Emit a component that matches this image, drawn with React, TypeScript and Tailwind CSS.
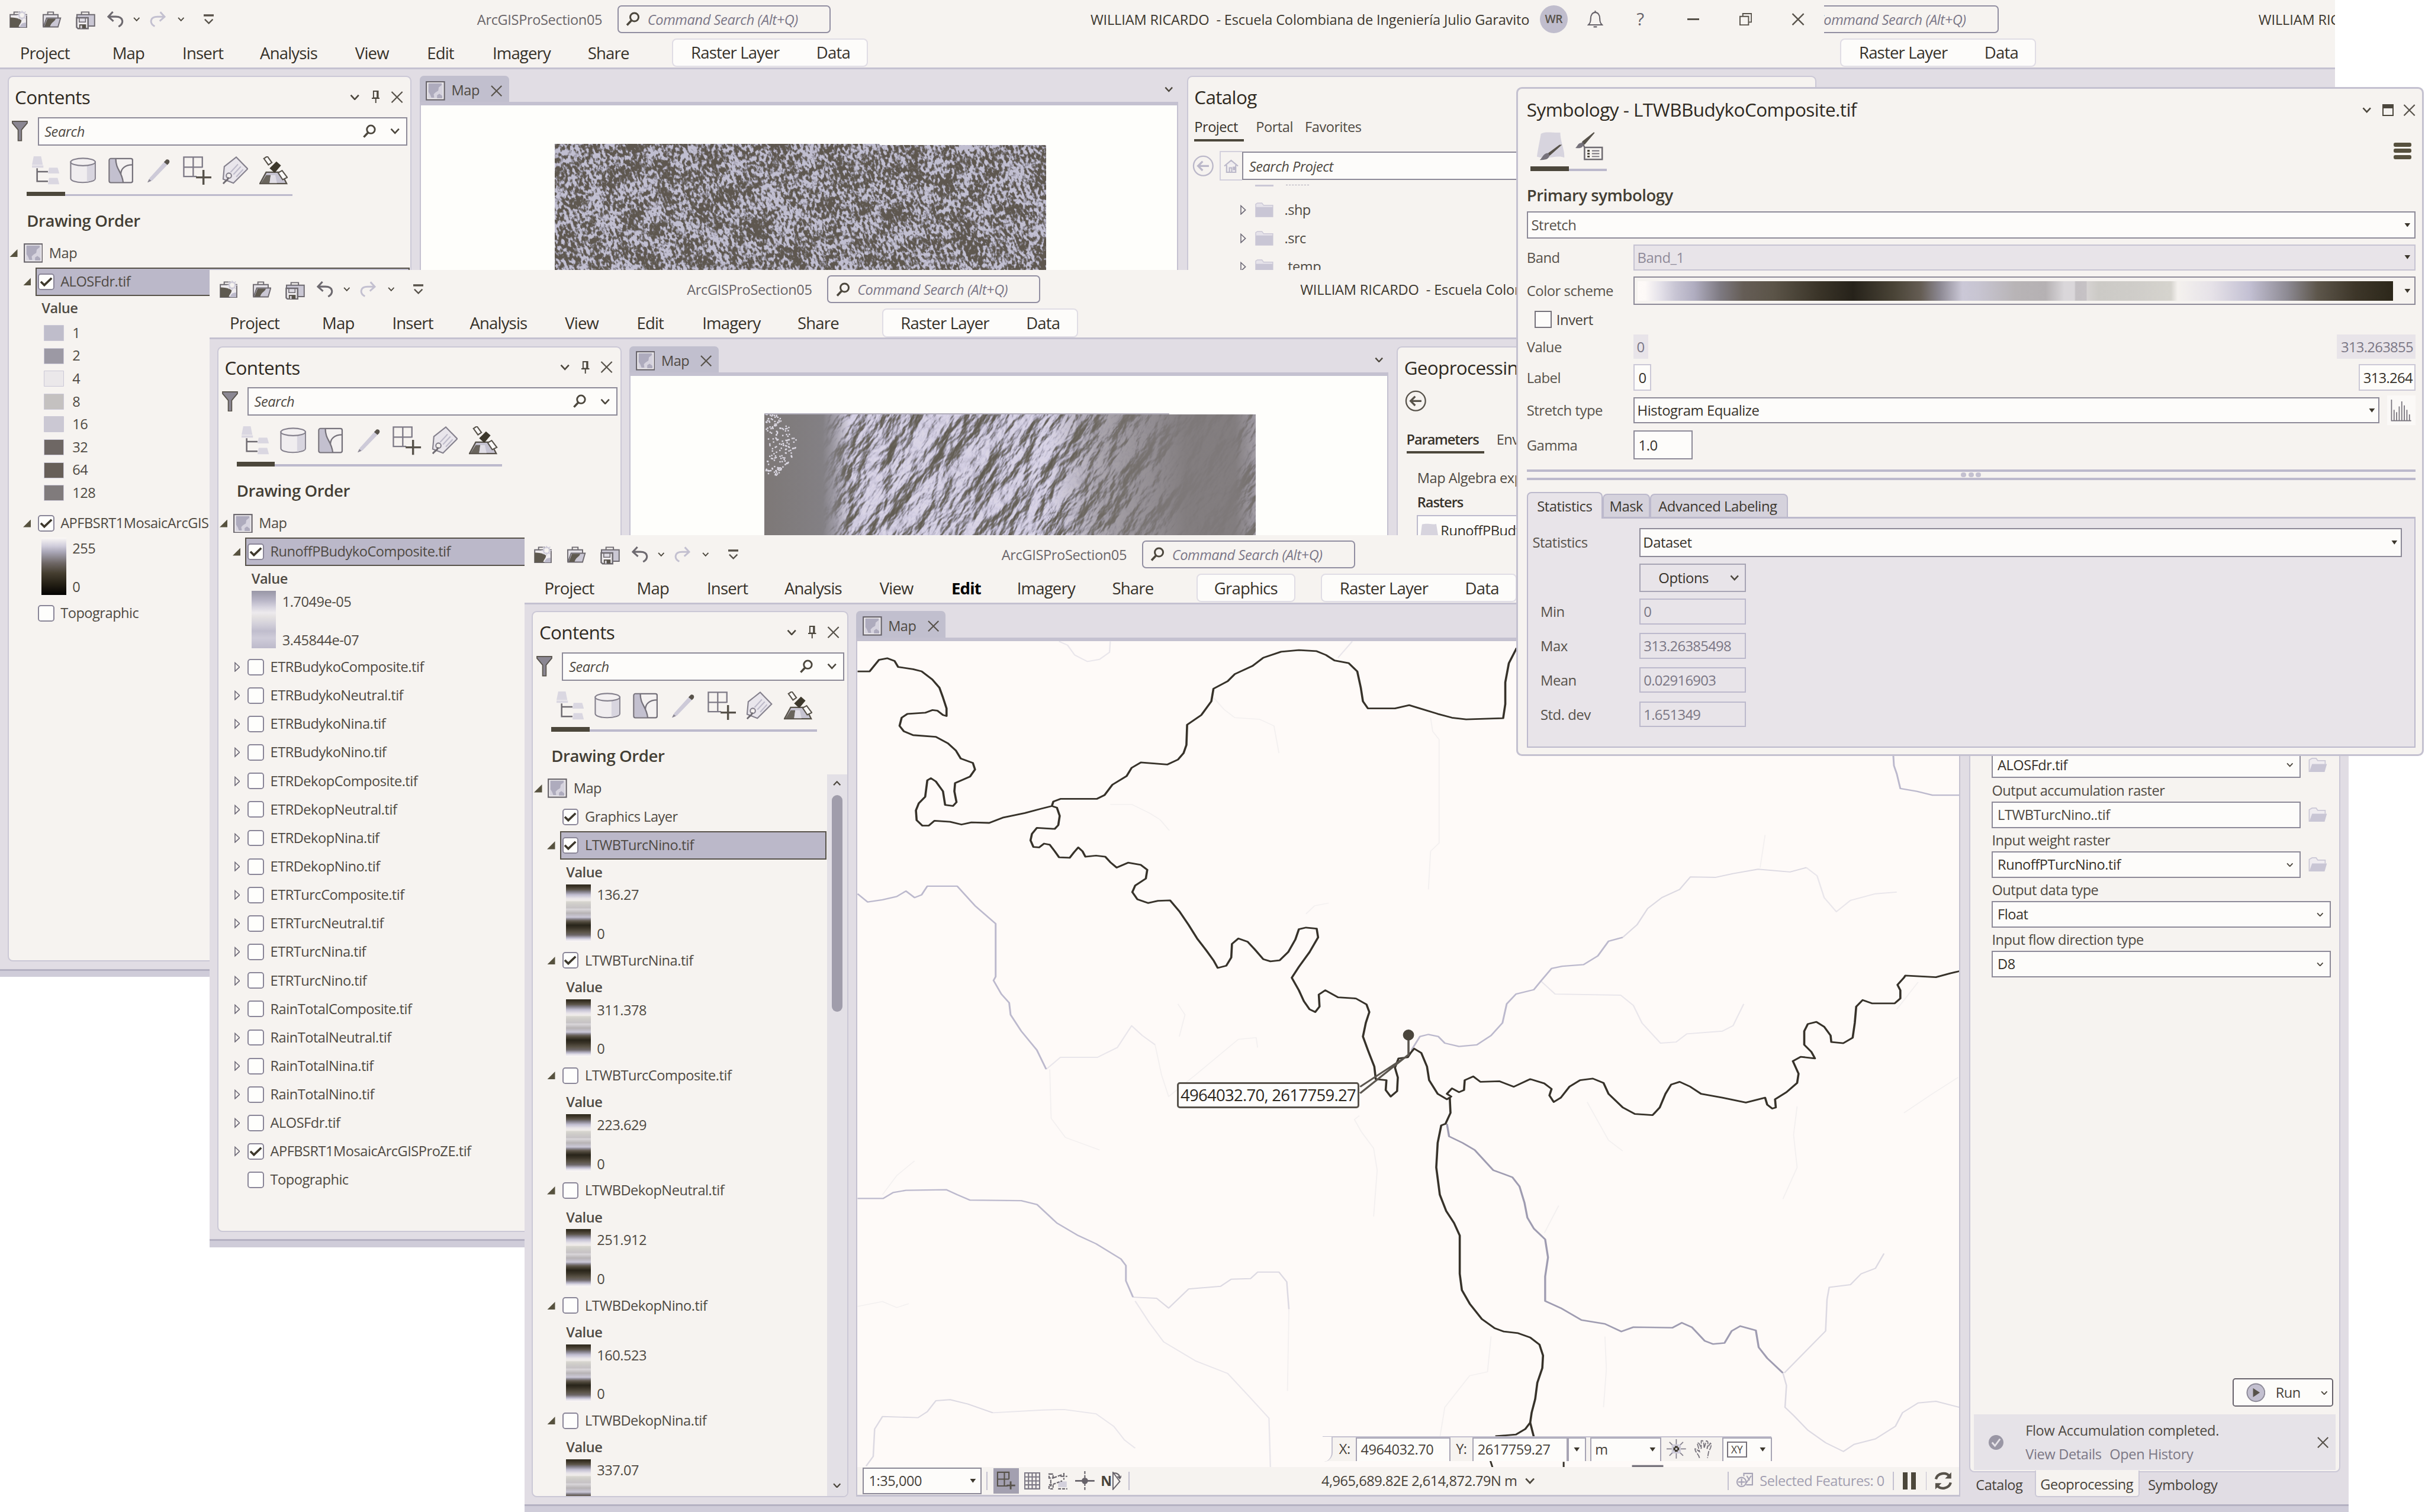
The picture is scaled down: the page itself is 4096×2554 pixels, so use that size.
import React from "react";

type P = { className?: string };

/* ---------- small glyphs ---------- */
const Chev = ({ className = "" }: P) => (
  <svg viewBox="0 0 16 10" className={`shrink-0 ${className}`} fill="none" stroke="#4c473d" strokeWidth="2.6">
    <path d="M1.5 1.5 8 8.5l6.5-7" />
  </svg>
);
const Cross = ({ className = "" }: P) => (
  <svg viewBox="0 0 20 20" className={`shrink-0 ${className}`} fill="none" stroke="#57524a" strokeWidth="2.2">
    <path d="M1 1l18 18M19 1 1 19" />
  </svg>
);
const Caret = ({ className = "" }: P) => (
  <svg viewBox="0 0 10 7" className={`h-[7px] w-[11px] shrink-0 ${className}`}>
    <path d="M0 0h10L5 7z" fill="#3b362c" />
  </svg>
);
const Pin = ({ className = "" }: P) => (
  <svg viewBox="0 0 14 22" className={`shrink-0 ${className}`} fill="none" stroke="#4c473d" strokeWidth="2">
    <path d="M3 1h8v12H3zM0 13.5h14M7 14v8M9.5 1v12" />
  </svg>
);
const Lens = ({ className = "" }: P) => (
  <svg viewBox="0 0 24 24" className={`shrink-0 ${className}`} fill="none" stroke="#4c473d" strokeWidth="3">
    <circle cx="14.5" cy="9" r="7" />
    <path d="M10 14 2 22.5" strokeWidth="3.6" />
  </svg>
);
const OpenTri = ({ className = "" }: P) => (
  <svg viewBox="0 0 14 14" className={`h-[14px] w-[14px] shrink-0 ${className}`}>
    <path d="M14 0v14H0z" fill="#57523f" />
  </svg>
);
const ClosedTri = ({ className = "" }: P) => (
  <svg viewBox="0 0 10 18" className={`h-[18px] w-[10px] shrink-0 ${className}`} fill="none" stroke="#6b6775" strokeWidth="1.6">
    <path d="M1 1.5 9 9l-8 7.5z" />
  </svg>
);
const MapIcon = ({ className = "" }: P) => (
  <svg viewBox="0 0 34 34" className={`h-[34px] w-[34px] shrink-0 ${className}`}>
    <rect x="1.2" y="1.2" width="31.6" height="31.6" fill="#f3f0f2" stroke="#67636a" strokeWidth="2.2" />
    <rect x="4" y="4" width="26" height="26" fill="#d6d3de" />
    <path d="M5 4h23v3l-5 4-1 6-5 3-3 3 1 6H10l-2-5-3-5zM20 25l4-3 5 4v4h-9z" fill="#aeabbd" />
  </svg>
);
const Check = ({ on = false }: { on?: boolean }) => (
  <span className="flex h-[29px] w-[29px] shrink-0 items-center justify-center rounded-[5px] border-[2.1px] border-[#8a8698] bg-[#fefefc]">
    {on && (
      <svg viewBox="0 0 24 20" className="h-[19px] w-[23px]" fill="none" stroke="#3d382c" strokeWidth="4">
        <path d="M2 9.5 8.5 16 22 3" />
      </svg>
    )}
  </span>
);
const Folder = ({ className = "" }: P) => (
  <svg viewBox="0 0 32 26" className={`shrink-0 ${className}`}>
    <path d="M1 25V4l5-3h7l3 4h13v6" fill="#efecf0" stroke="#cbc8d6" strokeWidth="1.8" />
    <path d="M1 25 6 11h26l-4 14z" fill="#c9c6d5" />
  </svg>
);
const ClosedFolder = () => (
  <svg viewBox="0 0 32 26" className="h-[26px] w-[32px] shrink-0">
    <path d="M1 25V3l3-2h8l3 4h16v20z" fill="#e6e3ea" stroke="#cbc8d6" strokeWidth="1.5" />
    <path d="M1 8h30v17H1z" fill="#c9c6d5" />
  </svg>
);
const BackArrow = ({ color = "#bbb8c9", className = "" }: P & { color?: string }) => (
  <svg viewBox="0 0 38 38" className={`h-[38px] w-[38px] shrink-0 ${className}`} fill="none" stroke={color} strokeWidth="2.4">
    <circle cx="19" cy="19" r="17" />
    <path d="M29 19H11M18 11l-8 8 8 8" strokeWidth="3.4" />
  </svg>
);

/* ---------- title bar ---------- */
const NewProject = () => (
  <svg viewBox="0 0 32 30" className="h-[30px] w-[32px] shrink-0">
    <path d="M1.2 29V7H30v22z" fill="#efecef" stroke="#6e6a70" strokeWidth="2" />
    <path d="M8 7V2.5h10V7" fill="none" stroke="#6e6a70" strokeWidth="2" />
    <path d="M1 12c7 0 16 1 20 5 0 5-4 7-5 12H1z" fill="#5f5a50" />
    <path d="M18 29c2-7 6-8 11-8v8z" fill="#bdbacb" />
    <circle cx="22" cy="8" r="5.5" fill="#f6f3f0" stroke="#cfccd9" strokeWidth="2.2" />
    <path d="M22-1v18M13 8h18M15.5 1.5l13 13M28.5 1.5l-13 13" stroke="#cfccd9" strokeWidth="1.6" />
    <circle cx="22" cy="8" r="3.6" fill="#f6f3f0" />
  </svg>
);
const OpenProject = () => (
  <svg viewBox="0 0 34 30" className="h-[30px] w-[34px] shrink-0">
    <path d="M2 28V7h26v6" fill="#e3e0e6" stroke="#6e6a70" strokeWidth="2" />
    <path d="M10 7V2.5h10V7" fill="none" stroke="#6e6a70" strokeWidth="2" />
    <path d="M2.5 28.5 8 13h24.5L28 28.5z" fill="#cac7d4" stroke="#6e6a70" strokeWidth="2" />
    <path d="M4 28 9.5 14H24c-2 6-8 6-10 14z" fill="#5f5a50" />
  </svg>
);
const SaveProject = () => (
  <svg viewBox="0 0 34 33" className="h-[33px] w-[34px] shrink-0">
    <path d="M2 13V7h31v20H22" fill="#cac7d4" stroke="#6e6a70" strokeWidth="2" />
    <path d="M10 7V2.5h13V7" fill="none" stroke="#6e6a70" strokeWidth="2" />
    <path d="M1.5 12.5h20v19H4l-2.5-2.5z" fill="#f0edf0" stroke="#6e6a70" strokeWidth="2.6" />
    <path d="M6 13h11v7H6z" fill="#dedbe3" stroke="#6e6a70" strokeWidth="1.6" />
    <path d="M6 24h12v7H6z" fill="#57524a" />
    <path d="M8 26h3v5H8z" fill="#d9d6de" />
  </svg>
);
const Undo = ({ color, flip = false }: { color: string; flip?: boolean }) => (
  <svg viewBox="0 0 29 28" className={flip ? "h-[28px] w-[28px] shrink-0 -scale-x-100" : "h-[28px] w-[29px] shrink-0"} fill="none" stroke={color} strokeWidth="3.2">
    <path d="M10 1 2 9.5l9 8M2 9.5h13c14 0 15 12 5 17.5" />
  </svg>
);

function TitleBar() {
  return (
    <div className="flex h-[67px] shrink-0 items-center text-[24.5px]">
      <span className="ml-[17px] flex shrink-0"><NewProject /></span>
      <span className="ml-[25px] flex shrink-0"><OpenProject /></span>
      <span className="ml-[25px] flex shrink-0 pt-1"><SaveProject /></span>
      <span className="ml-[21px] flex shrink-0"><Undo color="#6e6a70" /></span>
      <Chev className="ml-[17px] h-[9px] w-[12px]" />
      <span className="ml-[17px] flex shrink-0"><Undo color="#c3c0d0" flip /></span>
      <Chev className="ml-[21px] h-[9px] w-[12px]" />
      <svg viewBox="0 0 18 18" className="ml-[33px] h-[18px] w-[18px] shrink-0" fill="none" stroke="#57524a">
        <path d="M0 2h18" strokeWidth="3.6" />
        <path d="M2 9l7 7 7-7" strokeWidth="2.4" />
      </svg>
      <span className="ml-[462px] w-[246px] shrink-0 whitespace-nowrap pt-[2px] tracking-[-0.38px] text-[#6a666a]">ArcGISProSection05</span>
      <span className="flex h-[49px] w-[374px] shrink-0 items-center rounded-[7px] border-[2.1px] border-[#918ea1] pl-[13px] italic text-[#7b7788]">
        <Lens className="mr-[13px] h-[25px] w-[25px]" />
        <span className="whitespace-nowrap pt-[2px] tracking-[-0.4px]">Command Search (Alt+Q)</span>
      </span>
      <span className="ml-[456px] w-[788px] shrink-0 whitespace-pre pt-[2px] tracking-[-0.15px] text-[#3d382f]">WILLIAM RICARDO  - Escuela Colombiana de Ingeniería Julio Garavito</span>
      <span className="flex h-[49px] w-[49px] shrink-0 items-center justify-center rounded-full bg-[#c0bdcd] text-[20px] font-semibold text-[#57524a]">WR</span>
      <svg viewBox="0 0 28 32" className="ml-[34px] h-[32px] w-[28px] shrink-0" fill="none" stroke="#67636a" strokeWidth="2.2">
        <path d="M14 1v3M2 26h24c-3-3-4-5-4-11 0-6-3-11-8-11S6 9 6 15c0 6-1 8-4 11zM11 29.5h6" />
      </svg>
      <span className="ml-[59px] w-[16px] shrink-0 text-[31px] text-[#67636a]">?</span>
      <span className="ml-[73px] h-[3px] w-[21px] shrink-0 bg-[#57524a]" />
      <svg viewBox="0 0 22 22" className="ml-[70px] h-[22px] w-[22px] shrink-0" fill="none" stroke="#57524a" strokeWidth="2">
        <path d="M1 6h15v15H1zM6 6V1h15v15h-5" />
      </svg>
      <Cross className="ml-[70px] h-[22px] w-[23px]" />
    </div>
  );
}

const MENUS: [string, string][] = [
  ["Project", "w-[162px]"],
  ["Map", "w-[123px]"],
  ["Insert", "w-[136px]"],
  ["Analysis", "w-[167px]"],
  ["View", "w-[126px]"],
  ["Edit", "w-[115px]"],
  ["Imagery", "w-[167px]"],
  ["Share", "w-[147px]"],
];

function MenuBar({ graphics = false, active = "" }: { graphics?: boolean; active?: string }) {
  return (
    <div className="flex h-[51px] shrink-0 items-center pl-[35px] text-[28.6px] tracking-[-0.85px] text-[#37322a]">
      {MENUS.map(([m, w]) => (
        <span key={m} className={`${w} shrink-0 pt-[1px] ${m === active ? "font-bold text-black" : ""}`}>{m}</span>
      ))}
      {graphics && (
        <span className="mr-[44px] ml-[1px] flex h-[50px] w-[173px] shrink-0 items-center justify-center rounded-[8px] border-[2.1px] border-[#e0dde5] bg-[#fdfcfa]">Graphics</span>
      )}
      <span className="ml-[1px] flex h-[50px] w-[344px] shrink-0 items-center rounded-[8px] border-[2.1px] border-[#e0dde5] bg-[#fdfcfa] pl-[31px]">
        <span className="w-[220px] shrink-0">Raster Layer</span>
        <span>Data</span>
      </span>
    </div>
  );
}

function Win({ className, children, graphics, active }: { className: string; children?: React.ReactNode; graphics?: boolean; active?: string }) {
  return (
    <section className={`absolute flex flex-col overflow-hidden bg-[#f6f3f0] ${className}`}>
      <TitleBar />
      <MenuBar graphics={graphics} active={active} />
      <div className="flex h-[1582px] shrink-0 items-start border-t-[3.15px] border-[#c4c1d0] bg-[#e1dde4] pl-[13px] pt-[12px]">{children}</div>
      <div className="h-[14px] shrink-0 border-t-[3.15px] border-[#b4b1c2] bg-[#cfccd9]" />
    </section>
  );
}

/* ---------- contents pane ---------- */
const paneIcon = "h-[50px] shrink-0";
function PaneIcons() {
  return (
    <div className="ml-[32px] mt-[19px] w-[466px]">
      <div className="flex items-start pl-[9px]">
        <svg viewBox="0 0 48 50" className={`${paneIcon} w-[48px]`}>
          <path d="M3 0h13l3 15H0zM0 16h20v4H0zM30 20h15l3 10H28zM30 38h15l3 11H28z" fill="#dad7e1" />
          <path d="M9 21v23h19M9 27h19" fill="none" stroke="#6e6a70" strokeWidth="2.6" />
        </svg>
        <svg viewBox="0 0 46 50" className={`${paneIcon} ml-[19px] w-[46px]`}>
          <path d="M1.5 10v29c0 4 9 7 21 7s22-3 22-7V10z" fill="#f0edef" stroke="#85818d" strokeWidth="2.2" />
          <path d="M30 15h13v26l-13 4z" fill="#d8d5df" />
          <ellipse cx="23" cy="10" rx="21.5" ry="6.5" fill="#f3f0f1" stroke="#85818d" strokeWidth="2.2" />
        </svg>
        <svg viewBox="0 0 44 50" className={`${paneIcon} ml-[21px] w-[44px]`}>
          <rect x="1.5" y="4" width="41" height="42" rx="3" fill="#f4f1f1" stroke="#76727b" strokeWidth="2.4" />
          <path d="M3 5h10c0 18 10 20 12 40H3z" fill="#c3c0cf" />
          <path d="M13 4c0 20 11 22 13 42M42 15c-12 0-20 6-20 16" fill="none" stroke="#76727b" strokeWidth="2.4" />
        </svg>
        <svg viewBox="0 0 44 50" className={`${paneIcon} ml-[24px] w-[44px]`}>
          <path d="M5 38 33 7l6 5L10 42l-8 4z" fill="#cdcad8" />
          <path d="M33 7c3-4 9 0 6 5l-3 3-6-5z" fill="#57524a" />
          <path d="m1 46 3-6 4 3z" fill="#8b8792" />
        </svg>
        <svg viewBox="0 0 50 50" className={`${paneIcon} ml-[19px] w-[50px]`} fill="none" stroke="#7d7985" strokeWidth="2.4">
          <path d="M34 20V1.5H1.5v34H24M1.5 19h32M18 1.5v34" />
          <path d="M36 24v26M23 37h27" stroke="#57524a" strokeWidth="3.6" />
        </svg>
        <svg viewBox="0 0 46 50" className={`${paneIcon} ml-[18px] w-[46px]`} fill="none" stroke="#85818d" strokeWidth="2.2">
          <path d="M25 1.5 4 18 2 40l18 7 25-25z" fill="#e9e6ec" />
          <path d="M28 14 15 28M33 18 20 32M37 23 25 36" stroke="#bebbca" />
          <circle cx="12" cy="34" r="4.5" fill="#f6f3f0" />
          <path d="M11 37c0 5-3 4-9 11" strokeWidth="3" stroke="#6e6a70" />
        </svg>
        <svg viewBox="0 0 50 50" className={`${paneIcon} ml-[20px] w-[50px]`}>
          <path d="M12 28h26l10 20H1z" fill="#c6c3d1" stroke="#57524a" strokeWidth="2.4" />
          <path d="M12 33h8l-2 14H3z" fill="#6a655d" />
          <path d="M20 33h8l3 14H18z" fill="#e0dde5" />
          <path d="m8 4 6-4 8 11-6 4zM33 29l7-4 9 12-8 4z" fill="#fbf9f8" stroke="#57524a" strokeWidth="2.2" />
          <path d="m18 21 12-12 8 7-11 13z" fill="#3d382c" />
        </svg>
      </div>
      <div className="mt-[12px] flex h-[8px] items-end bg-transparent">
        <span className="h-[8px] w-[67px] bg-[#4c473b]" />
        <span className="h-[4px] flex-1 bg-[#bcb9cc]" />
      </div>
    </div>
  );
}

const Row = ({ name, on, open, closed, sel }: { name: string; on?: boolean; open?: boolean; closed?: boolean; sel?: boolean }) => (
  <div className="flex h-[50px] shrink-0 items-center">
    <span className="flex w-[47px] shrink-0 justify-end pr-[8px]">
      {open && <OpenTri />}
      {closed && <ClosedTri className="mr-[1px]" />}
    </span>
    <span className={`flex h-[50px] flex-1 items-center whitespace-nowrap border-[2.1px] pl-[2px] ${sel ? "mr-[1px] border-[#57524a] bg-[#bbb8c9]" : "border-transparent"}`}>
      <Check on={on} />
      <span className="ml-[11px]">{name}</span>
    </span>
  </div>
);
const ValueHead = () => <div className="flex h-[43px] shrink-0 items-center pl-[58px] pt-[1px] font-semibold">Value</div>;

const SCHEME_UP =
  "bg-[linear-gradient(to_top,#fdf9f7_0%,#e4e1e9_4%,#b9b6c9_7%,#6d6768_12%,#5b5448_17%,#3a3428_24%,#28241a_29%,#4a4437_34%,#655d54_37%,#8c8892_40%,#cbc8d7_43%,#b8b4b6_50%,#dad7da_57%,#c6c2c5_59%,#cfcdc9_66%,#d8d6d0_70%,#f0edea_72%,#e8e4e9_76%,#c0bdd0_82%,#7a767e_88%,#5d564b_91%,#3d3629_96%,#2c271a_100%)]";
const SCHEME_RIGHT =
  "bg-[linear-gradient(to_right,#fefaf8_0%,#fdf9f7_1%,#e4e1e9_3%,#c8c5d4_5%,#b0adc0_7.5%,#7d7980_11%,#655d56_14%,#5b5448_18%,#3a3428_24%,#26221a_28.5%,#4a4437_34%,#655d54_37.5%,#8c8892_40%,#cbc8d7_43%,#c8c5d2_45%,#b8b4b6_50%,#b5b1b3_54%,#dad7da_56.5%,#dad7da_57.8%,#c4c0c3_58%,#c6c2c5_59.4%,#d6d3d2_59.5%,#cccac6_61%,#cfcdc9_66%,#d6d4ce_70.6%,#f4f1ee_71.5%,#e6e2e8_76%,#c3c0d3_81%,#8d8a93_86%,#5d564b_90%,#3d3629_95%,#2c271a_100%)]";

const Ramp = ({ cls, hi, lo }: { cls: string; hi: string; lo: string }) => (
  <div className="flex shrink-0 pl-[58px]">
    <span className={`h-[101px] w-[43px] ${cls}`} />
    <span className="ml-[11px] flex h-[101px] flex-col justify-between pt-[1px] leading-[36px]">
      <span>{hi}</span>
      <span className="-mb-[4px]">{lo}</span>
    </span>
  </div>
);

function Contents({ className, children, scroll = false }: { className: string; children: React.ReactNode; scroll?: boolean }) {
  return (
    <div className={`flex h-[1554px] shrink-0 flex-col overflow-hidden rounded-[9px] border-[2.1px] border-[#cbc8d6] bg-[#f6f3f0] text-[24.5px] text-[#4f4a43] ${className}`}>
      <div className="flex h-[70px] shrink-0 items-center pl-[11px] pr-[13px]">
        <span className="flex-1 text-[32.7px] tracking-[-0.7px] text-[#2f2a22]">Contents</span>
        <Chev className="h-[11px] w-[17px]" />
        <Pin className="ml-[21px] h-[22px] w-[14px]" />
        <Cross className="ml-[19px] h-[21px] w-[22px]" />
      </div>
      <div className="flex h-[50px] shrink-0 items-center pl-[6px] pr-[5px]">
        <svg viewBox="0 0 28 36" className="mr-[17px] h-[36px] w-[28px] shrink-0">
          <path d="M1 1h26v3L17 16v19h-6V16L1 4z" fill="#8b8792" stroke="#57524a" strokeWidth="1.8" />
        </svg>
        <span className="flex h-[50px] flex-1 items-center border-[2.1px] border-[#8d8a98] bg-[#fdfcfa] pl-[10px] pr-[11px] italic">
          <span className="flex-1 pt-[2px]">Search</span>
          <Lens className="h-[24px] w-[25px]" />
          <Chev className="ml-[24px] h-[11px] w-[17px]" />
        </span>
      </div>
      <PaneIcons />
      <div className="flex h-[75px] shrink-0 items-center pl-[32px] pt-[10px] text-[28.6px] font-semibold tracking-[-0.4px] text-[#433e34]">Drawing Order</div>
      <div className="flex min-h-0 flex-1">
        <div className="flex flex-1 flex-col overflow-hidden">
          <div className="flex h-[50px] shrink-0 items-center pl-[2px]">
            <OpenTri />
            <MapIcon className="ml-[10px]" />
            <span className="ml-[11px]">Map</span>
          </div>
          {children}
        </div>
        {scroll && (
          <div className="flex w-[35px] shrink-0 flex-col items-center bg-[#e3e0e6] pt-[12px]">
            <Chev className="h-[9px] w-[16px] rotate-180" />
            <span className="mt-[16px] h-[380px] w-[19px] rounded-full bg-[#a09dab]" />
            <Chev className="mt-auto mb-[14px] h-[9px] w-[16px]" />
          </div>
        )}
      </div>
    </div>
  );
}

function MapView({ className, bodyClass = "bg-[#fefefb]", children }: { className: string; bodyClass?: string; children: React.ReactNode }) {
  return (
    <div className={`flex shrink-0 flex-col ${className}`}>
      <div className="flex h-[46px] shrink-0 items-center">
        <span className="flex h-[46px] w-[157px] items-center rounded-t-[7px] bg-[#c1bfce] pl-[11px] pt-[6px] text-[24.5px] text-[#4f4a43]">
          <MapIcon />
          <span className="ml-[11px] w-[69px]">Map</span>
          <Cross className="h-[20px] w-[20px]" />
        </span>
        <Chev className="ml-auto mr-[9px] mt-[2px] h-[10px] w-[15px]" />
      </div>
      <div className={`min-h-0 flex-1 border-t-[6.3px] border-l-[2.1px] border-r-[2.1px] border-b-[3.15px] border-[#c4c1d0] ${bodyClass}`}>{children}</div>
    </div>
  );
}

const Pane = ({ className, children }: { className: string; children: React.ReactNode }) => (
  <div className={`flex shrink-0 flex-col overflow-hidden rounded-[9px] border-[2.1px] border-[#cbc8d6] bg-[#f6f3f0] text-[24.5px] text-[#4f4a43] ${className}`}>{children}</div>
);

/* ---------- rasters ---------- */
function FlowRaster() {
  return (
    <svg viewBox="0 0 862 240" className="ml-[235px] mt-[67px] h-[240px] w-[862px]">
      <defs>
        <filter id="flow" x="0" y="0" width="1" height="1" colorInterpolationFilters="sRGB">
          <feTurbulence type="fractalNoise" baseFrequency="0.2 0.13" numOctaves="3" seed="4" />
          <feColorMatrix values="1 0 0 0 0  1 0 0 0 0  1 0 0 0 0  0 0 0 0 1" result="fine" />
          <feTurbulence type="fractalNoise" baseFrequency="0.024 0.03" numOctaves="4" seed="19" />
          <feColorMatrix values="1 0 0 0 0  1 0 0 0 0  1 0 0 0 0  0 0 0 0 1" result="broad" />
          <feComposite in="fine" in2="broad" operator="arithmetic" k2="1" k3="0.55" k4="-0.275" />
          <feColorMatrix values="4.5 0 0 0 -1.8  4.5 0 0 0 -1.8  4.5 0 0 0 -1.8  0 0 0 0 1" />
          <feComponentTransfer>
            <feFuncR type="table" tableValues="0.37 0.45 0.62 0.76" />
            <feFuncG type="table" tableValues="0.345 0.43 0.61 0.75" />
            <feFuncB type="table" tableValues="0.31 0.43 0.67 0.82" />
          </feComponentTransfer>
        </filter>
      </defs>
      <g transform="rotate(-20 431 120)">
        <rect x="-60" y="-250" width="980" height="740" filter="url(#flow)" />
      </g>
      <path d="M570 0h292v2H570z" fill="#fefefb" />
    </svg>
  );
}

function ReliefRaster() {
  const specks: [number, number][] = [];
  let s = 7;
  for (let i = 0; i < 170; i++) {
    s = (s * 16807) % 2147483647;
    const a = s / 2147483647;
    s = (s * 16807) % 2147483647;
    const b = s / 2147483647;
    specks.push([2 + a * (16 + 38 * Math.sin(b * 3.1)), b * 108]);
  }
  return (
    <svg viewBox="0 0 862 240" className="ml-[235px] mt-[66px] h-[240px] w-[862px]">
      <defs>
        <filter id="relief" x="0" y="0" width="1" height="1" colorInterpolationFilters="sRGB">
          <feTurbulence type="fractalNoise" baseFrequency="0.009 0.021" numOctaves="5" seed="31" />
          <feColorMatrix values="0 0 0 0 0  0 0 0 0 0  0 0 0 0 0  1.2 0 0 0 0" />
          <feDiffuseLighting surfaceScale="21" diffuseConstant="1.15" lightingColor="#dedbe6">
            <feDistantLight azimuth="265" elevation="52" />
          </feDiffuseLighting>
          <feComponentTransfer>
            <feFuncR type="table" tableValues="0.38 0.43 0.53 0.7 0.86" />
            <feFuncG type="table" tableValues="0.36 0.41 0.52 0.69 0.85" />
            <feFuncB type="table" tableValues="0.32 0.38 0.53 0.74 0.9" />
          </feComponentTransfer>
        </filter>
        <linearGradient id="flatL" x1="0" x2="1">
          <stop offset="0" stopColor="#7d7877" />
          <stop offset="0.68" stopColor="#838084" />
          <stop offset="0.8" stopColor="#868389" stopOpacity="0.75" />
          <stop offset="1" stopColor="#838084" stopOpacity="0" />
        </linearGradient>
        <linearGradient id="flatR" x1="0" x2="1">
          <stop offset="0" stopColor="#7b7673" stopOpacity="0" />
          <stop offset="0.25" stopColor="#7b7673" stopOpacity="0.5" />
          <stop offset="0.5" stopColor="#7f7a7b" stopOpacity="0.78" />
          <stop offset="0.66" stopColor="#7f7a7b" stopOpacity="0.96" />
          <stop offset="0.9" stopColor="#7f7a7b" stopOpacity="0.96" />
          <stop offset="1" stopColor="#7f7a7b" stopOpacity="0.6" />
        </linearGradient>
      </defs>
      <g transform="rotate(-58 431 120)">
        <rect x="-40" y="-360" width="940" height="960" filter="url(#relief)" />
      </g>
      <path d="M0 0h150v240H0z" fill="url(#flatL)" />
      <path d="M500 0h362v240H500z" fill="url(#flatR)" />
      {specks.map(([x, y], i) => (
        <rect key={i} x={x} y={y} width="2.5" height="2.5" fill="#dcd9e4" />
      ))}
      <path d="M0 0h710v2H0z" fill="#b3b0bd" />
      <path d="M710 0h152v2H710z" fill="#fefefb" />
    </svg>
  );
}

/* ---------- river map ---------- */
const Line = ({ p }: { p: string }) => <polyline points={p} />;

function Rivers() {
  return (
    <svg viewBox="9.6 14.6 1548 1515.9" preserveAspectRatio="none" className="block h-full w-full" fill="none" strokeLinejoin="round">
      <g stroke="#f3f0f0" strokeWidth="1.6">
        <Line p="510,118 525,140 540,155 575,158 595,170 602,220" />
        <Line p="815,155 818,180 827,195 827,300 827,385 815,400 812,470" />
        <Line p="365,314 395,314 420,330 435,342 448,362" />
        <Line p="280,800 282,890 302,925 350,948" />
        <Line p="428,755 437,810 447,850 485,810 545,745 570,742 572,760" />
        <Line p="640,515 652,500 672,495" />
        <Line p="715,885 708,892 718,915 735,945 740,985 735,1070" />
        <Line p="10,1235 45,1226 65,1237 82,1230" />
        <Line p="45,1030 65,995 90,968" />
        <Line p="900,1290 895,1355 870,1362 835,1420 825,1500" />
        <Line p="1330,868 1325,920 1330,980 1310,1038" />
        <Line p="1035,860 1065,930 1085,950" />
        <Line p="1480,880 1520,845 1556,815" />
        <Line p="616,1240 614,1390" />
        <Line p="1470,690 1500,640" />
        <Line p="1285,370 1278,430" />
        <Line p="1060,1290 1062,1350 1058,1420" />
        <Line p="460,680 470,700 462,740" />
        <Line p="995,1050 975,1100" />
      </g>
      <g stroke="#e9e6eb" strokeWidth="2">
        <Line p="293,15 305,22 315,40 333,52 350,48 364,35 365,15" />
        <Line p="705,15 685,45" />
        <Line p="970,638 990,662 1082,664 1100,683 1112,715 1138,752 1160,750 1175,735 1225,730 1240,720 1255,680" />
        <Line p="275,800 295,778 347,778 375,760 395,720 410,738 428,755" />
        <Line p="400,1225 420,1265 440,1300 485,1335 530,1358 560,1400 588,1440 590,1530" />
        <Line p="1343,430 1358,445 1368,485 1385,511 1405,490 1440,478 1470,475" />
        <Line p="200,1430 270,1425 300,1424 345,1432 370,1455 385,1480 400,1495" />
      </g>
      <g stroke="#dcd9e2" strokeWidth="2.1">
        <Line p="397,1218 430,1220 447,1238 475,1203 520,1198 535,1185 562,1184 572,1172 602,1172 613,1190 616,1240" />
        <Line p="1312,1357 1370,1280 1372,1222 1375,1200 1405,1195 1420,1175 1440,1165 1452,1138" />
        <Line p="1085,558 1105,535 1120,505 1140,485 1165,470 1180,447 1215,448 1240,441 1275,433 1320,438 1343,430" />
        <Line p="22,1528 32,1510 34,1460 45,1437 95,1439 108,1428 120,1408 140,1406 165,1414 200,1430" />
        <Line p="1310,1357 1315,1380 1313,1420 1325,1435 1345,1462 1370,1485 1395,1501 1410,1488 1440,1478 1468,1455 1478,1430 1500,1412 1525,1409 1558,1420" />
      </g>
      <g stroke="#bcb9cd" strokeWidth="2.5">
        <Line p="10,478 24,493 45,489 65,483 78,473 90,485 100,480 108,464 150,464 175,500 204,533 204,630 201,637 212,662 223,678 225,700 240,730 262,765 275,800" />
        <Line p="10,1037 46,1037 60,1026 78,1022 135,1021 150,1030 168,1040 240,1041 262,1048 290,1082 320,1105 345,1120 380,1148 387,1160 387,1188 397,1218" />
        <Line p="1465,222 1466,243 1470,258 1475,285 1498,290 1520,297 1558,297" />
        <Line p="788,765 800,740 812,736 826,740 835,752 855,758 880,755 900,738 916,715 922,680 935,662 960,654 970,638 985,615 1000,611 1030,608 1050,592 1065,565 1085,558" />
      </g>
      <g stroke="#9f9cb1" strokeWidth="2.8">
        <Line p="838,900 841,923 860,935 877,948 903,985 930,998 940,1015 947,1045 951,1072 960,1092 976,1112 980,1145 976,1180 976,1225 998,1238 1027,1260 1060,1267 1083,1281 1100,1273 1155,1274 1168,1265 1182,1273 1200,1298 1212,1304 1228,1302 1238,1280 1250,1271 1272,1279 1276,1310 1288,1330 1310,1357" />
      </g>
      <g stroke="#37322a" strokeWidth="3">
        <Line p="10,70 27,70 40,49 52,46 62,51 67,62 88,66 100,70 115,85 125,100 130,118 135,138 135,152 130,150 122,142 115,141 105,146 80,148 72,155 69,170 75,180 88,187 120,190 137,202 148,215 155,230 172,238 175,250 168,263 147,275 146,290 149,310 144,317 133,315 130,290 120,272 113,266 108,270 105,300 96,312 92,325 93,343 101,353 110,353 118,344 140,346 156,351 170,347 195,348 215,338 245,330 268,322 283,317 285,309 295,304 346,304 357,297 368,278 388,262 395,247 408,237 445,241 460,232 468,220 472,205 473,168 493,150 507,125 510,102 530,88 540,75 565,60 580,45 605,34 630,31 655,33 668,40 680,50 700,55 712,70 717,100 720,125 727,138 765,138 785,132 800,138 825,148 845,155 865,158 917,156 920,130 920,90 925,55 936,27" />
        <Line p="283,317 290,320 294,335 292,352 287,359 262,357 255,368 253,380 257,392 265,393 272,386 280,388 287,400 293,411 308,412 314,402 320,393 326,400 330,410 345,408 358,410 365,420 374,430 390,421 408,425 417,434 415,450 400,463 396,475 403,488 418,495 432,491 449,490 462,510 475,535 487,560 500,582 510,600 516,614 528,610 535,595 536,570 545,560 558,566 568,580 580,598 590,602 603,600 615,585 625,562 630,543 640,540 655,542 657,558 645,585 630,612 620,632 630,655 637,675 645,690 653,695 659,685 658,663 667,655 685,668 710,670 725,681 729,695 724,715 720,740 727,765 736,795 738,818 753,820 752,838 759,850 768,840 769,815 765,797 770,780 783,778 787,770 792,762 802,770 810,795 813,820 825,845 838,855 844,850 838,845 845,835 855,842 862,838 863,820 875,813 885,823 912,822 932,832 955,818 975,826 985,836 982,848 988,860 998,852 1010,832 1025,820 1043,817 1058,825 1065,845 1085,870 1102,882 1127,884 1137,870 1145,845 1153,828 1165,823 1180,832 1195,845 1225,852 1258,861 1285,852 1288,865 1295,872 1300,870 1299,855 1315,842 1330,825 1332,808 1324,785 1335,777 1355,780 1350,768 1340,755 1340,730 1345,717 1357,713 1368,722 1377,738 1378,750 1395,752 1408,742 1411,715 1413,685 1422,673 1435,679 1467,679 1475,670 1475,655 1471,645 1480,632 1482,628 1525,631 1545,624 1558,620" />
        <Line p="842,852 843,880 836,900 830,903 825,935 823,980 828,1030 837,1060 848,1082 856,1105 856,1175 859,1205 870,1230 887,1258 905,1275 918,1281 938,1284 955,1292 968,1305 973,1325 972,1348 965,1375 962,1405 957,1430 955,1448 948,1460 935,1470 906,1473" />
        <Line p="955,1448 960,1474" />
      </g>
      <path d="M716 832 784 774v-36M716 844l69-72" stroke="#5b564f" strokeWidth="3" />
      <ellipse cx="784" cy="737" rx="7.8" ry="10" fill="#4a453c" />
      <path d="M899 1518l3 12M1002 1520v10" stroke="#37322a" strokeWidth="2.5" />
      <path d="M1098 1528h44" stroke="#76727b" strokeWidth="4" />
    </svg>
  );
}

/* ---------- status bar and coordinate toolbar ---------- */
const Sep = ({ className = "" }: P) => <span className={`h-[32px] w-[2px] shrink-0 bg-[#c4c1d0] ${className}`} />;

function StatusBar() {
  return (
    <div className="flex h-[48px] shrink-0 items-center whitespace-nowrap bg-[#f6f3f0] pl-[9px] text-[24.5px] text-[#47423a]">
      <span className="flex h-[46px] w-[209px] shrink-0 items-center justify-between border-[2.1px] border-[#8d8a98] bg-[#fdfcfa] pl-[9px] pr-[8px]">1:35,000<Caret /></span>
      <Sep className="ml-[8px]" />
      <span className="ml-[11px] flex h-[44px] w-[44px] shrink-0 items-center justify-center bg-[#a3a0b0]">
        <svg viewBox="0 0 34 34" className="h-[34px] w-[34px]" fill="none" stroke="#57524a" strokeWidth="2.2"><path d="M22 14V2H2v24h18M2 14h20M14 2v24" /><path d="M25 18v14M18 25h15" strokeWidth="3" /></svg>
      </span>
      <svg viewBox="0 0 28 30" className="ml-[10px] h-[30px] w-[28px] shrink-0" fill="none" stroke="#7d7985" strokeWidth="2.2"><path d="M1 1h26v28H1zM1 8h26M1 15h26M1 22h26M7.5 1v28M14 1v28M20.5 1v28" /></svg>
      <svg viewBox="0 0 36 32" className="ml-[13px] h-[32px] w-[36px] shrink-0" fill="none" stroke="#67636a" strokeWidth="2.2"><path d="M2 4h7v7H2zM22 8h12M28 2v12M5 14v12M9 11l16-6" strokeDasharray="7 2" /><path d="M18 17h15v10H18z" fill="#d3d0dc" stroke="none" /><path d="M9 22l16-6M2 23h7v7H2zM18 30h16" strokeDasharray="5 2" /></svg>
      <svg viewBox="0 0 34 34" className="ml-[12px] h-[34px] w-[34px] shrink-0" fill="none" stroke="#67636a" strokeWidth="2.2"><path d="M17 0v34" strokeDasharray="5 2" /><path d="M0 17h34" strokeWidth="3" /><circle cx="17" cy="17" r="4.5" fill="#67636a" /></svg>
      <span className="ml-[11px] w-[18px] text-[24px] font-bold">N</span>
      <svg viewBox="0 0 18 32" className="h-[32px] w-[18px] shrink-0" fill="none" stroke="#67636a" strokeWidth="2"><path d="M3 1v30l12-14zM3 2c9 0 12 4 12 9M11 8l4 4 3-5" /></svg>
      <Sep className="ml-[13px]" />
      <span className="ml-[336px] w-[356px] shrink-0">4,965,689.82E 2,614,872.79N m</span>
      <Chev className="h-[11px] w-[19px]" />
      <Sep className="ml-[338px]" />
      <svg viewBox="0 0 32 32" className="ml-[12px] h-[32px] w-[32px] shrink-0" fill="none" stroke="#a7a4b6" strokeWidth="2.2"><circle cx="10" cy="18" r="8" /><path d="M10 12v12M4 18h12M14 8V3h15v20H18M19 7l5 8M27 7l-9 13" /></svg>
      <span className="ml-[10px] w-[233px] shrink-0 text-[#a29fb1]">Selected Features: 0</span>
      <Sep />
      <span className="ml-[16px] h-[30px] w-[8px] shrink-0 bg-[#4c473b]" />
      <span className="ml-[7px] h-[30px] w-[8px] shrink-0 bg-[#4c473b]" />
      <Sep className="ml-[17px]" />
      <svg viewBox="0 0 34 34" className="ml-[12px] h-[34px] w-[34px] shrink-0" fill="none" stroke="#57524a" strokeWidth="4.5"><path d="M4 14C7 3 22 1 28 9M30 20C27 31 12 33 6 25" /><path d="M31 2v11H20zM3 32V21h11z" fill="#57524a" stroke="none" /></svg>
    </div>
  );
}

function CoordBar() {
  const box = "flex h-[42px] shrink-0 items-center border-[2.1px] border-b-0 border-[#a7a4b4] bg-[#fdfcfa]";
  return (
    <div className="absolute left-[818px] top-[1447px] flex h-[44px] w-[787px] items-center whitespace-nowrap border-t-[2.1px] border-[#c4c1d0] bg-[#f6f3f0] text-[24.5px] text-[#47423a]">
      <span className="h-[44px] w-[18px] shrink-0 rounded-br-[16px] border-r-[2.1px] border-[#c4c1d0] bg-[#fefaf8]" />
      <span className="ml-[11px] w-[29px] shrink-0">X:</span>
      <span className={`${box} w-[166px] pl-[7px]`}>4964032.70</span>
      <span className="ml-[10px] w-[29px] shrink-0">Y:</span>
      <span className={`${box} w-[167px] pl-[7px]`}>2617759.27</span>
      <span className={`${box} w-[32px] justify-center`}><Caret /></span>
      <span className={`${box} ml-[8px] w-[124px] justify-between pl-[6px] pr-[7px]`}>m<Caret /></span>
      <svg viewBox="0 0 34 34" className="ml-[10px] h-[34px] w-[34px] shrink-0" fill="none" stroke="#85818d" strokeWidth="1.8"><path d="M9 9h16v16H9z" fill="#cfccd9" stroke="none" /><path d="M17 12v10M12 17h10" stroke="#3d382c" strokeWidth="5" /><circle cx="17" cy="17" r="2" fill="#cfccd9" stroke="none" /><path d="M17 0v9M17 25v9M0 17h9M25 17h9M5 5l5 5M24 24l5 5M29 5l-5 5M10 24l-5 5" /></svg>
      <svg viewBox="0 0 36 36" className="ml-[13px] h-[36px] w-[36px] shrink-0" fill="none" stroke="#76727b" strokeWidth="1.8"><path d="M10 34c-2-8-8-10-8-16 4 0 5 4 8 5L6 8c4-2 5 4 7 10V4c4-2 5 4 5 13l4-13c4 0 3 6 1 14l6-10c3 2 1 8-3 15l-2 11" strokeDasharray="9 2" /></svg>
      <span className={`${box} ml-[14px] w-[87px] justify-between pl-[6px] pr-[8px]`}>
        <span className="flex h-[28px] w-[36px] items-center justify-center border-[2.1px] border-[#76727b] text-[18px] tracking-normal">XY</span>
        <Caret />
      </span>
    </div>
  );
}

/* ---------- geoprocessing ---------- */
const Field = ({ label, value, folder, select, dark = true }: { label: string; value: string; folder?: boolean; select?: boolean; dark?: boolean }) => (
  <div className="h-[87.3px] shrink-0 pl-[38px]">
    <div className="flex h-[41px] items-center pt-[2px]">{label}</div>
    <div className="flex items-center">
      <span className={`flex h-[46px] items-center justify-between border-[2.1px] border-[#8d8a98] bg-[#fdfcfa] pl-[8px] pr-[11px] ${dark ? "text-[#37322a]" : ""} ${folder ? "w-[542px]" : "w-[595px]"}`}>
        {value}
        {select && <Chev className="h-[8px] w-[12px]" />}
      </span>
      {folder && <Folder className="ml-[13px] h-[26px] w-[33px]" />}
    </div>
  </div>
);

const COLLAPSED = [
  "ETRBudykoComposite.tif", "ETRBudykoNeutral.tif", "ETRBudykoNina.tif", "ETRBudykoNino.tif",
  "ETRDekopComposite.tif", "ETRDekopNeutral.tif", "ETRDekopNina.tif", "ETRDekopNino.tif",
  "ETRTurcComposite.tif", "ETRTurcNeutral.tif", "ETRTurcNina.tif", "ETRTurcNino.tif",
  "RainTotalComposite.tif", "RainTotalNeutral.tif", "RainTotalNina.tif", "RainTotalNino.tif", "ALOSFdr.tif",
];
const GROUPS = [
  { name: "LTWBTurcNino.tif", hi: "136.27", on: true, sel: true },
  { name: "LTWBTurcNina.tif", hi: "311.378", on: true },
  { name: "LTWBTurcComposite.tif", hi: "223.629" },
  { name: "LTWBDekopNeutral.tif", hi: "251.912" },
  { name: "LTWBDekopNino.tif", hi: "160.523" },
  { name: "LTWBDekopNina.tif", hi: "337.07" },
];
const SWATCHES: [string, string][] = [
  ["1", "bg-[#bfbdcb]"], ["2", "bg-[#9c99a4]"], ["4", "bg-[#ebe8ea]"], ["8", "bg-[#c4c1c0]"],
  ["16", "bg-[#cbc8d3]"], ["32", "bg-[#6e6764]"], ["64", "bg-[#675f58]"], ["128", "bg-[#807b7c]"],
];

/* ---------- symbology ---------- */
const SymRow = ({ label, h, children, first = "w-[187px]" }: { label: string; h: string; children: React.ReactNode; first?: string }) => (
  <div className={`flex shrink-0 items-center ${h}`}>
    <span className={`${first} shrink-0 whitespace-nowrap`}>{label}</span>
    {children}
  </div>
);

function Symbology() {
  const input = "flex items-center border-[2.1px] border-[#8d8a98] bg-[#fdfcfa]";
  return (
    <section className="absolute left-[2660px] top-[153px] flex h-[1173px] w-[1592px] flex-col rounded-[10px] border-[3.15px] border-[#c4c1d0] bg-[#f6f3f0] pl-[15px] pr-[12px] text-[24.8px] text-[#57524b]">
      <div className="flex h-[74px] shrink-0 items-center text-[32.7px] text-[#2f2a22]">
        <span className="flex-1 pb-[2px] tracking-[-0.55px]">Symbology - LTWBBudykoComposite.tif</span>
        <Chev className="h-[10px] w-[16px]" />
        <span className="ml-[19px] h-[20px] w-[20px] border-[2.1px] border-t-[7.3px] border-[#4c473d]" />
        <Cross className="ml-[16px] h-[21px] w-[22px]" />
      </div>
      <div className="flex h-[71px] shrink-0 items-start justify-between pl-[7px] pr-[7px]">
        <div className="w-[133px]">
          <div className="flex pl-[10px] pt-[2px]">
            <svg viewBox="0 0 50 50" className="h-[50px] w-[50px] shrink-0"><path d="M8 3c8-5 22-1 34-2 0 16 8 30 7 44-12-6-30 5-48-2C3 28 6 16 8 3z" fill="#d7d4de" /><path d="M41 23 22 37l-5 6 6-2 20-18z" fill="#57524a" stroke="#57524a" strokeWidth="1.5" /><path d="M21 37c-9 0-9 7-15 12 9 0 16-1 17-8z" fill="#76727b" /></svg>
            <svg viewBox="0 0 50 50" className="ml-[17px] h-[50px] w-[50px] shrink-0"><path d="M34 1 14 17l-2 5 5-1z" fill="#57524a" stroke="#57524a" strokeWidth="2" /><path d="M12 19c-7 0-7 6-11 9 8 1 13 0 14-6z" fill="#76727b" /><path d="M17 27h31v21H17zM17 27l-4-9" fill="#f6f3f0" stroke="#6e6a70" strokeWidth="2.6" /><path d="M22 33h4M22 38h4M22 43h4" stroke="#3d382c" strokeWidth="3" /><path d="M30 33h13M30 38h13M30 43h13" stroke="#76727b" strokeWidth="2" /></svg>
          </div>
          <div className="mt-[10px] flex items-end"><span className="h-[8px] w-[67px] bg-[#4c473b]" /><span className="h-[4px] flex-1 bg-[#bcb9cc]" /></div>
        </div>
        <div className="mt-[20px] flex flex-col gap-[4px]">
          <span className="h-[7px] w-[31px] rounded-[3px] bg-[#57513f]" />
          <span className="h-[7px] w-[31px] rounded-[3px] bg-[#57513f]" />
          <span className="h-[7px] w-[31px] rounded-[3px] bg-[#57513f]" />
        </div>
      </div>
      <div className="flex h-[70px] shrink-0 items-center pt-[13px] text-[28.6px] font-semibold text-[#433e34]">Primary symbology</div>
      <div className={`${input} h-[47px] shrink-0 justify-between pl-[6px] pr-[6px]`}>Stretch<Caret /></div>
      <SymRow label="Band" h="h-[67px]">
        <span className="flex h-[46px] flex-1 items-center justify-between border-[2.1px] border-[#c6c3d2] bg-[#e8e4e9] pl-[5px] pr-[6px] text-[#8f8b99]">Band_1<Caret /></span>
      </SymRow>
      <SymRow label="Color scheme" h="h-[50px]">
        <span className="flex h-[50px] flex-1 items-center border-[2.1px] border-[#8d8a98] bg-[#f6f3f0] pl-[5px]">
          <span className={`h-[34px] w-[1326px] ${SCHEME_RIGHT}`} />
          <Caret className="ml-[19px]" />
        </span>
      </SymRow>
      <div className="flex h-[51px] shrink-0 items-center pl-[14px] text-[#47423a]">
        <span className="mr-[8px] h-[30px] w-[30px] border-[2.1px] border-[#76727b] bg-[#fdfcfa]" />Invert
      </div>
      <SymRow label="Value" h="h-[44px]">
        <span className="flex h-[42px] items-center bg-[#e8e4e9] px-[6px] text-[#7b7785]">0</span>
        <span className="ml-auto flex h-[42px] items-center bg-[#e8e4e9] px-[4px] pl-[7px] tracking-[-0.75px] text-[#7b7785]">313.263855</span>
      </SymRow>
      <SymRow label="Label" h="h-[64px]">
        <span className="flex h-[47px] items-center border-[2.1px] border-[#cbc8d6] bg-[#fdfcfa] px-[7px] text-[#37322a]">0</span>
        <span className="ml-auto flex h-[47px] items-center border-[2.1px] border-[#cbc8d6] bg-[#fdfcfa] pr-[3px] pl-[6px] tracking-[-0.75px] text-[#37322a]">313.264</span>
      </SymRow>
      <SymRow label="Stretch type" h="h-[52px]">
        <span className={`${input} h-[46px] w-[1309px] justify-between pl-[5px] pr-[6px] text-[#37322a]`}>Histogram Equalize<Caret /></span>
        <span className="ml-auto flex h-[52px] w-[50px] items-center justify-center bg-[#fbf9f7]">
          <svg viewBox="0 0 36 38" className="h-[38px] w-[36px]" fill="none" stroke="#76727b" strokeWidth="1.8"><path d="M1.5 0v37H36M6 36V18M10.5 36V22M15 36V12M19.5 36V3M24 36V10M28.5 36V18M33 36v-10" /></svg>
        </span>
      </SymRow>
      <SymRow label="Gamma" h="h-[69px]">
        <span className={`${input} h-[51px] w-[104px] pl-[7px] text-[#37322a]`}>1.0</span>
      </SymRow>
      <div className="mt-[9px] flex h-[18px] shrink-0 items-center justify-center gap-[4px] border-y-[4.2px] border-[#bcb9cc]">
        <span className="h-[9px] w-[9px] rounded-full bg-[#c3c0d0]" />
        <span className="h-[9px] w-[9px] rounded-full bg-[#c3c0d0]" />
        <span className="h-[9px] w-[9px] rounded-full bg-[#c3c0d0]" />
      </div>
      <div className="mt-[20px] flex h-[45px] shrink-0 items-end text-[#3d382f]">
        <span className="relative z-10 -mb-[3px] flex h-[47px] w-[133px] items-center rounded-t-[8px] border-[2.1px] border-b-0 border-[#bcb9cc] bg-[#e8e4e9] pl-[16px]">Statistics</span>
        <span className="flex h-[41px] w-[83px] items-center rounded-t-[8px] border-[2.1px] border-b-0 border-[#bcb9cc] bg-[#d5d2dc] pl-[10px]">Mask</span>
        <span className="flex h-[41px] w-[242px] items-center rounded-t-[8px] border-[2.1px] border-b-0 border-[#bcb9cc] bg-[#d5d2dc] pl-[13px]">Advanced Labeling</span>
      </div>
      <div className="flex h-[405px] shrink-0 flex-col border-[2.1px] border-t-[3.15px] border-[#bcb9cc] bg-[#e8e4e9] pl-[8px] pr-[21px] pt-[16px]">
        <SymRow label="Statistics" h="h-[51px]">
          <span className={`${input} h-[51px] flex-1 justify-between pl-[5px] pr-[6px] text-[#37322a]`}>Dataset<Caret /></span>
        </SymRow>
        <SymRow label="" h="h-[73px]">
          <span className="flex h-[50px] w-[187px] items-center justify-between border-[2.1px] border-[#a7a4b4] pl-[32px] pr-[9px] text-[#37322a]">Options<Chev className="h-[10px] w-[16px]" /></span>
        </SymRow>
        {[["Min", "0"], ["Max", "313.26385498"], ["Mean", "0.02916903"], ["Std. dev", "1.651349"]].map(([l, v]) => (
          <div key={l} className="mb-[14.6px] flex h-[45.5px] shrink-0 items-center">
            <span className="w-[187px] shrink-0 pl-[14px]">{l}</span>
            <span className="flex h-[45px] w-[187px] items-center border-[2.1px] border-[#bcb9cc] pl-[6px] tracking-[-0.75px] text-[#7b7785]">{v}</span>
          </div>
        ))}
      </div>
    </section>
  );
}

export default function App() {
  return (
    <main className="h-[2554px] w-[4096px] overflow-hidden bg-white">
      <div className="relative h-[2652px] w-[4254px] overflow-hidden bg-white font-['Open_Sans','Noto_Sans',sans-serif] tracking-[-0.5px] [zoom:0.9629]">
        {/* rearmost project window */}
        <Win className="left-[2049px] top-0 h-[900px] w-[2047px]" />

        {/* flow direction project */}
        <Win className="left-0 top-0 h-[1714px] w-[3200px]">
          <Contents className="w-[709px]">
            <Row name="ALOSFdr.tif" on open sel />
            <ValueHead />
            <div className="h-[2px] shrink-0" />
            {SWATCHES.map(([n, c]) => (
              <div key={n} className="flex h-[40.1px] shrink-0 items-center pl-[62px]">
                <span className={`h-[28px] w-[35px] rounded-[1px] border border-[#cbc8d6] ${c}`} />
                <span className="ml-[15px]">{n}</span>
              </div>
            ))}
            <div className="mt-[8px]"><Row name="APFBSRT1MosaicArcGISProZE.tif" on open /></div>
            <Ramp cls="bg-[linear-gradient(to_bottom,#fbf8f6_0%,#cfccda_15%,#aaa7b7_25%,#6d6664_45%,#453e30_62%,#262116_80%,#030201_100%)]" hi="255" lo="0" />
            <div className="mt-[7px]"><Row name="Topographic" /></div>
          </Contents>
          <MapView className="ml-[14px] h-[1552px] w-[1331px]"><FlowRaster /></MapView>
          <Pane className="ml-[15px] h-[1508px] w-[1104px]">
            <div className="flex h-[69px] shrink-0 items-center pl-[11px] pt-[1px] text-[32.7px] tracking-[-0.7px] text-[#2f2a22]">Catalog</div>
            <div className="flex h-[44px] shrink-0 items-stretch pl-[11px] pt-[3px]">
              <span className="mr-[21px] flex w-[87px] items-center border-b-[4.2px] border-[#4c473b] pb-[5px] text-[#37322a]">Project</span>
              <span className="flex w-[86px] items-center pb-[9px]">Portal</span>
              <span className="flex items-center pb-[9px]">Favorites</span>
            </div>
            <div className="mt-[17px] flex h-[52px] shrink-0 items-center pl-[8px]">
              <BackArrow />
              <span className="ml-[9px] flex h-[52px] w-[40px] items-center justify-center border-[2.1px] border-r-0 border-[#d3d0dc]">
                <svg viewBox="0 0 26 24" className="h-[24px] w-[26px]" fill="#f0edf0" stroke="#bbb8c9" strokeWidth="2.2"><path d="M1 12 13 2l12 10M5 10v13h16V10M10 23v-8h4v8M17 14h2v4h-2z" /></svg>
              </span>
              <span className="flex h-[50px] flex-1 items-center border-[2.1px] border-[#8d8a98] bg-[#fdfcfa] pl-[10px] pt-[2px] italic">Search Project</span>
            </div>
            <div className="flex h-[26px] shrink-0 items-start pl-[118px] pt-[7px]"><span className="h-[3px] w-[32px] bg-[#cbc8d6]" /><span className="ml-[22px] w-[40px] border-t-2 border-dashed border-[#a7a4b4]" /></div>
            {[".shp", ".src", ".temp"].map((n) => (
              <div key={n} className="flex h-[50px] shrink-0 items-center pl-[92px]">
                <ClosedTri />
                <span className="ml-[16px] mr-[19px] flex"><ClosedFolder /></span>
                {n}
              </div>
            ))}
          </Pane>
        </Win>

        {/* runoff project */}
        <Win className="left-[368px] top-[474px] h-[1714px] w-[3200px]">
          <Contents className="w-[709px]">
            <Row name="RunoffPBudykoComposite.tif" on open sel />
            <ValueHead />
            <Ramp cls="bg-[linear-gradient(to_bottom,#9896a5_0%,#b9b6c7_17%,#d6d3de_28%,#edeaed_38%,#e5e2e2_45%,#d3d0da_58%,#c0bdcd_70%,#cfccd9_82%,#bdbacb_100%)]" hi="1.7049e-05" lo="3.45844e-07" />
            <div className="h-[8px] shrink-0" />
            {COLLAPSED.map((n) => <Row key={n} name={n} closed />)}
            <Row name="APFBSRT1MosaicArcGISProZE.tif" on closed />
            <Row name="Topographic" />
          </Contents>
          <MapView className="ml-[14px] h-[1552px] w-[1331px]"><ReliefRaster /></MapView>
          <Pane className="ml-[15px] h-[1508px] w-[1104px]">
            <div className="flex h-[69px] shrink-0 items-center pl-[11px] pt-[1px] text-[32.7px] tracking-[-0.7px] text-[#2f2a22]">Geoprocessing</div>
            <div className="flex h-[50px] shrink-0 items-center pl-[12px]"><BackArrow color="#57524a" /></div>
            <div className="mt-[24px] flex h-[43px] shrink-0 items-stretch pl-[15px]">
              <span className="mr-[21px] flex w-[137px] items-center border-b-[4.2px] border-[#4c473b] font-semibold tracking-[-1.1px] text-[#37322a]">Parameters</span>
              <span className="flex items-center pb-[4px]">Environments</span>
            </div>
            <div className="mt-[22px] flex h-[44px] shrink-0 items-center pl-[34px]">Map Algebra expression</div>
            <div className="flex h-[40px] shrink-0 items-center pl-[34px] font-semibold tracking-[-1.1px] text-[#37322a]">Rasters</div>
            <div className="mt-[2px] ml-[33px] h-[300px] shrink-0 border-[2.1px] border-[#bcb9cc] bg-[#fdfcfa] pl-[4px] pt-[5px]">
              <div className="flex h-[42px] items-center text-[#37322a]">
                <svg viewBox="0 0 32 26" className="mr-[4px] h-[30px] w-[32px]"><path d="M3 2c10-3 16 1 25-1l4 25H0z" fill="#d7d4de" /></svg>
                RunoffPBudykoComposite.tif
              </div>
            </div>
          </Pane>
        </Win>

        {/* accumulation project */}
        <Win className="left-[920px] top-[939px] h-[1714px] w-[3200px]" graphics active="Edit">
          <Contents className="w-[555px]" scroll>
            <Row name="Graphics Layer" on />
            {GROUPS.map((g) => (
              <div key={g.name} className="h-[201.8px] shrink-0">
                <Row name={g.name} on={g.on} open sel={g.sel} />
                <ValueHead />
                <Ramp cls={SCHEME_UP} hi={g.hi} lo="0" />
              </div>
            ))}
          </Contents>
          <div className="relative ml-[14px] shrink-0">
            <MapView className="h-[1553px] w-[1937px]" bodyClass="bg-[#fefaf8]">
              <div className="flex h-full flex-col">
                <div className="min-h-0 flex-1"><Rivers /></div>
                <StatusBar />
              </div>
            </MapView>
            <div className="absolute left-[563px] top-[826px] flex h-[46px] w-[319px] items-center justify-center whitespace-nowrap rounded-[5px] border-[3.15px] border-[#57524b] bg-[#fefdfc] text-[28.6px] tracking-[-0.75px] text-[#2c271e]">4964032.70, 2617759.27</div>
            <CoordBar />
          </div>
          <div className="ml-[15px] flex w-[651px] shrink-0 flex-col">
            <Pane className="h-[1511px] w-[651px]">
              <div className="h-[203px] shrink-0" />
              <div className="mt-[1px] flex shrink-0 flex-col">
                <Field label="Input flow direction raster" value="ALOSFdr.tif" folder select />
                <Field label="Output accumulation raster" value="LTWBTurcNino..tif" folder dark={false} />
                <Field label="Input weight raster" value="RunoffPTurcNino.tif" folder select />
                <Field label="Output data type" value="Float" select />
                <Field label="Input flow direction type" value="D8" select />
              </div>
              <div className="mt-auto mr-[10px] flex h-[50px] shrink-0 items-center self-end rounded-[5px] border-[2.1px] border-[#67626b] bg-[#fdfcfa] pl-[21px] pr-[8px] text-[#47423a]">
                <svg viewBox="0 0 34 34" className="h-[34px] w-[34px]"><circle cx="17" cy="17" r="15.5" fill="#c3c0d0" stroke="#8d8a98" strokeWidth="2" /><path d="M12 9v16l12-8z" fill="#57524a" /></svg>
                <span className="ml-[18px] w-[79px]">Run</span>
                <Chev className="h-[8px] w-[12px]" />
              </div>
              <div className="mx-[6px] mt-[13px] mb-[2px] flex h-[98px] shrink-0 items-center bg-[#e6e3e8] pl-[25px] pr-[12px]">
                <svg viewBox="0 0 28 28" className="h-[28px] w-[28px]"><circle cx="14" cy="14" r="13" fill="#9a97a5" /><path d="m7 14 5 6 9-12" fill="none" stroke="#e6e3e8" strokeWidth="3" /></svg>
                <div className="ml-[38px] flex flex-1 flex-col gap-[6px] leading-[36px] tracking-[-0.35px]">
                  <span>Flow Accumulation completed.</span>
                  <span className="text-[#7b7785]">View Details<span className="ml-[14px]">Open History</span></span>
                </div>
                <Cross className="h-[20px] w-[20px]" />
              </div>
            </Pane>
            <div className="flex h-[44px] items-center pt-[1px] text-[24.5px] text-[#47423a]">
              <span className="w-[115px] pl-[12px]">Catalog</span>
              <span className="-mt-[5px] flex h-[46px] w-[184px] items-center rounded-b-[6px] border-[2.1px] border-t-0 border-[#cbc8d6] bg-[#f6f3f0] pl-[8px] pt-[4px]">Geoprocessing</span>
              <span className="pl-[15px] tracking-[-0.3px]">Symbology</span>
            </div>
          </div>
        </Win>

        <Symbology />
      </div>
    </main>
  );
}
